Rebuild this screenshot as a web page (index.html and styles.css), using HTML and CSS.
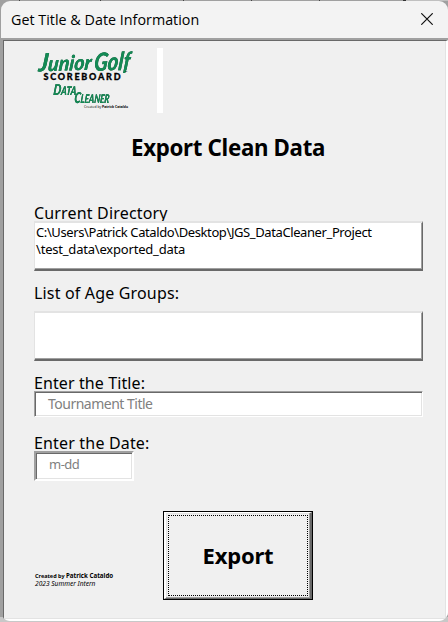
FILE: index.html
```
<!DOCTYPE html>
<html lang="en">
<head>
<meta charset="utf-8">
<title>Get Title &amp; Date Information</title>
<link rel="stylesheet" href="styles.css">
</head>
<body>
<div class="window">
  <header class="titlebar">
    <span class="caption">Get Title &amp; Date Information</span>
    <svg class="close" width="12" height="12" viewBox="0 0 12 12"><path d="M.3.3 11.7 11.7M11.7.3.3 11.7"/></svg>
  </header>
  <main class="form">
    <div class="brand">
      <svg class="logo" width="123" height="65" viewBox="34 48 123 65">
        <g class="script">
          <text transform="translate(38 71.5) rotate(-2) skewX(-8)" textLength="53" lengthAdjust="spacingAndGlyphs" font-size="21"><tspan font-size="25">J</tspan>unior</text>
          <text transform="translate(93.5 71) rotate(-2) skewX(-8)" textLength="36" lengthAdjust="spacingAndGlyphs" font-size="25">Golf</text>
          <text transform="translate(53 94.5) skewX(-6)" textLength="23" lengthAdjust="spacingAndGlyphs" font-size="15">D<tspan font-size="12">ATA</tspan></text>
          <text transform="translate(74 103) skewX(-6)" textLength="35" lengthAdjust="spacingAndGlyphs" font-size="15">C<tspan font-size="12">LEANER</tspan></text>
        </g>
        <text class="board" x="43.5" y="80" textLength="77">SCOREBOARD</text>
        <text class="tm" x="125" y="73">™</text>
        <text class="credit" x="84" y="107.5" textLength="44" lengthAdjust="spacingAndGlyphs">Created by <tspan font-weight="700">Patrick Cataldo</tspan></text>
      </svg>
      <div class="divider"></div>
    </div>
    <h1>Export Clean Data</h1>
    <div class="label directory">Current Directory</div>
    <div class="panel path">C:\Users\Patrick Cataldo\Desktop\JGS_DataCleaner_Project<br><span class="folder">\test_data\exported_data</span></div>
    <div class="label ages">List of Age Groups:</div>
    <div class="panel"></div>
    <div class="label title">Enter the Title:</div>
    <div class="field">Tournament Title</div>
    <div class="label date">Enter the Date:</div>
    <div class="field short">m-dd</div>
    <footer class="actions">
      <div class="author"><b>Created by <span>Patrick Cataldo</span></b><i>2023 Summer Intern</i></div>
      <div class="button"><div class="face"><div class="focus">Export</div></div></div>
    </footer>
  </main>
</div>
</body>
</html>
```
FILE: styles.css
```
* { box-sizing: border-box; }
body {
  margin: 0;
  width: 448px;
  height: 622px;
  overflow: hidden;
  padding: 1px 0;
  background:
    linear-gradient(90deg, transparent 19px, #444 19px 20px, transparent 20px 100px, #444 100px 101px, transparent 101px 183px, #444 183px 184px, transparent 184px 251px, #444 251px 252px, transparent 252px 319px, #444 319px 320px, transparent 320px 403px, #333 403px 406px, #c0c0c0 406px) 0 0 / 448px 1px no-repeat,
    linear-gradient(#c8c8c8, #c8c8c8) 0 100% / 448px 5px no-repeat,
    #a0a0a0;
  font-family: "Noto Sans", sans-serif;
  color: #000;
}
.window {
  width: 447px;
  height: 620px;
  margin-left: 1px;
  border-radius: 9px;
  overflow: hidden;
  background: #a0a0a0;
}
.titlebar {
  display: flex;
  align-items: center;
  justify-content: space-between;
  height: 37px;
  padding: 0 15px 0 10px;
  background: #f3f3f3;
}
.caption { font: 14.3px/36px "Open Sans", sans-serif; letter-spacing: .02px; }
.close { stroke: #111; stroke-width: 1.2; fill: none; margin-top: -1px; }
.form {
  height: 581px;
  margin: 2px 0 0 2px;
  padding: 7px 0 0 30px;
  border: solid;
  border-width: 1px 2px 2px 1px;
  border-color: #696969 #fff #fff #696969;
  box-shadow: inset -1px -1px #e3e3e3;
  background: #f0f0f0;
}
.brand { display: flex; height: 65px; }
.logo { display: block; }
.script {
  font-family: Lato, sans-serif;
  font-style: italic;
  font-weight: 900;
  fill: #148a55;
  filter: drop-shadow(.7px .5px 0 #174a35);
}
.board { font: 900 9px Lato, sans-serif; stroke: #000; stroke-width: .3px; }
.tm { font: 3px "Open Sans", sans-serif; }
.credit { font: 4px "Open Sans", sans-serif; }
.divider { width: 6px; background: #fff; }
h1 {
  width: 194px;
  height: 40px;
  margin: 15px 0 0 97px;
  font-size: 22.3px;
  line-height: 40px;
  white-space: nowrap;
  letter-spacing: -.32px;
}
.label {
  height: 19px;
  font-size: 16px;
  line-height: 23px;
  white-space: nowrap;
  letter-spacing: .17px;
}
.directory { margin-top: 34px; line-height: 22px; overflow: hidden; }
.ages { height: 24px; margin-top: 10px; margin-bottom: 6px; line-height: 24px; }
.title { height: 20px; margin-top: 10px; line-height: 24px; letter-spacing: .1px; }
.date { height: 20px; margin-top: 14px; line-height: 24px; }
.panel {
  width: 389px;
  height: 50px;
  border: solid;
  border-width: 2px 1px 2px 1px;
  border-color: #e3e3e3 #696969 #696969 #e3e3e3;
  box-shadow: inset -1px -1px #a0a0a0;
  background: #fff;
}
.path {
  padding: 1px 1px 0;
  font-size: 13px;
  line-height: 17px;
  white-space: nowrap;
  letter-spacing: -.4px;
}
.folder { letter-spacing: -.2px; }
.field {
  width: 389px;
  height: 26px;
  padding-left: 13px;
  border: 1px solid;
  border-color: #a0a0a0 #fff #fff #a0a0a0;
  box-shadow: inset 1px 1px #696969, inset -1px -1px #e3e3e3;
  background: #fff;
  color: #808080;
  font-size: 14px;
  line-height: 24px;
  letter-spacing: -.5px;
}
.short {
  width: 100px;
  height: 30px;
  border-width: 2px;
  font-size: 13px;
  line-height: 23px;
}
.actions { display: flex; margin-top: 30px; height: 89px; }
.author { width: 129px; padding: 61px 0 0 1px; white-space: nowrap; }
.author b, .author i { display: block; font-size: 6.6px; line-height: 8px; }
.author b { font-size: 5.5px; }
.author span { font-size: 6.2px; }
.button { width: 150px; height: 89px; border: 1px solid #000; }
.face {
  height: 100%;
  padding: 2px;
  border: solid;
  border-width: 1px 2px 1px 2px;
  border-color: #fff #696969 #696969 #fff;
  box-shadow: inset -1px -1px #a0a0a0, inset 1px 1px #e3e3e3;
}
.focus {
  height: 100%;
  border: 1px dotted #000;
  text-align: center;
  font-size: 22px;
  font-weight: 700;
  line-height: 79px;
  letter-spacing: -.2px;
}
```
